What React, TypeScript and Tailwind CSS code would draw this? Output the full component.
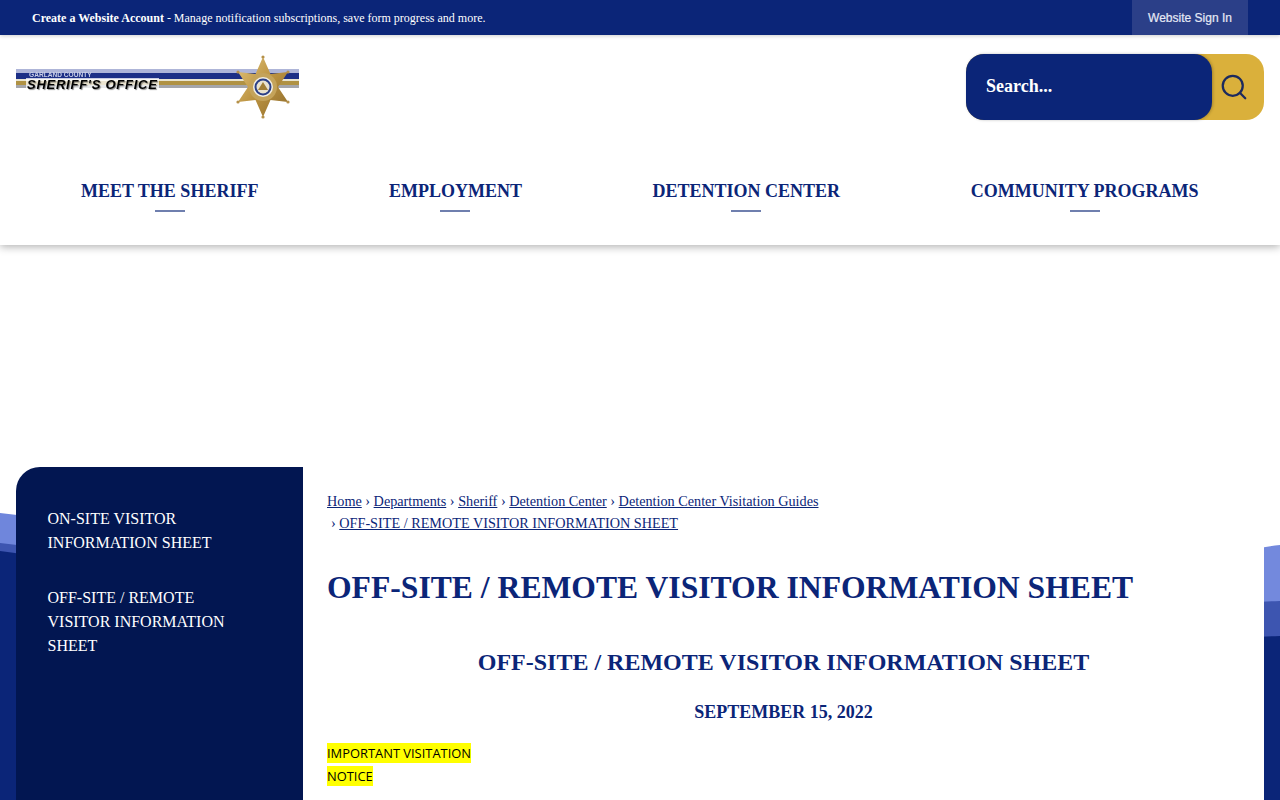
import { Search } from "lucide-react";

const navItems = ["MEET THE SHERIFF", "EMPLOYMENT", "DETENTION CENTER", "COMMUNITY PROGRAMS"];
const crumbs = ["Home", "Departments", "Sheriff", "Detention Center", "Detention Center Visitation Guides"];

function Logo() {
  return (
    <div className="relative h-[64px] w-[283px] blur-[0.3px]">
      <div className="absolute left-0 top-[13px] w-[283px]">
        <div className="h-[4px] bg-[#aeb5d8]" />
        <div className="h-[6px] bg-[#1c2f86]" />
        <div className="h-[2px] bg-[#e8e4d0]" />
        <div className="h-[4px] bg-[#b09243]" />
        <div className="h-[3px] bg-[#a5a6ab]" />
      </div>
      <span className="absolute left-[13px] top-[16px] text-[6.6px] font-bold leading-[6px] text-[#c9cfe6] [font-family:'Liberation_Sans',sans-serif]">
        GARLAND COUNTY
      </span>
      <span className="absolute left-[10px] top-[22px] bg-white/75 px-[1px] text-[13px] font-bold italic leading-[13px] tracking-[0.75px] text-black [font-family:'Liberation_Sans',sans-serif] [text-shadow:1px_1px_1px_rgba(0,0,0,0.45)]">
        SHERIFF'S OFFICE
      </span>
      <svg className="absolute left-[217px] top-[-2px]" width="60" height="66" viewBox="0 0 60 66">
        <defs>
          <linearGradient id="starGold" x1="0" y1="0" x2="1" y2="1">
            <stop offset="0" stopColor="#e3c67c" />
            <stop offset="0.5" stopColor="#bb9240" />
            <stop offset="1" stopColor="#8f6d2c" />
          </linearGradient>
        </defs>
        <polygon
          points="30,3 37.5,20 55,18 45,33 55,48 37.5,46 30,63 22.5,46 5,48 15,33 5,18 22.5,20"
          fill="url(#starGold)"
        />
        <circle cx="30" cy="3" r="1.6" fill="#b5914a" />
        <circle cx="30" cy="63" r="1.6" fill="#b5914a" />
        <circle cx="5" cy="18" r="1.6" fill="#b5914a" />
        <circle cx="55" cy="18" r="1.6" fill="#b5914a" />
        <circle cx="5" cy="48" r="1.6" fill="#b5914a" />
        <circle cx="55" cy="48" r="1.6" fill="#b5914a" />
        <circle cx="30" cy="33" r="14" fill="#c4a35a" />
        <circle cx="30" cy="33" r="10" fill="#f2efe4" />
        <circle cx="30" cy="33" r="8.5" fill="#2b3f86" />
        <circle cx="30" cy="33" r="6.5" fill="#e9e3cf" />
        <path d="M25 36 L30 28 L35 36 Z" fill="#a17f36" />
      </svg>
    </div>
  );
}

export default function App() {
  return (
    <div className="relative h-[800px] overflow-hidden bg-white [font-family:'Liberation_Serif',serif]">
      {/* background swooshes behind the content */}
      <svg className="absolute left-0 top-[500px]" width="1280" height="300" viewBox="0 0 1280 300">
        <path d="M0 13 Q 30 15 60 30 L 60 300 L 0 300 Z" fill="#6f86dc" />
        <path d="M0 43 Q 30 45 60 60 L 60 300 L 0 300 Z" fill="#3d55b0" />
        <path d="M0 51 Q 30 53 60 70 L 60 300 L 0 300 Z" fill="#0b2578" />
        <path d="M1220 58 Q 1250 48 1280 45 L 1280 300 L 1220 300 Z" fill="#7389dd" />
        <path d="M1220 104 Q 1250 102 1280 101 L 1280 300 L 1220 300 Z" fill="#3d55b0" />
        <path d="M1220 139 Q 1250 137 1280 136 L 1280 300 L 1220 300 Z" fill="#0b2578" />
      </svg>

      <header className="relative h-[245px] bg-white shadow-[0_2px_8px_rgba(0,0,0,0.3)]">
        <div className="relative z-10 flex h-[35px] items-center justify-between bg-[#0b2578] pl-8 pr-8 text-white shadow-[0_1px_4px_rgba(0,0,0,0.2)]">
          <p className="text-[12px]">
            <strong className="font-bold">Create a Website Account</strong> - Manage notification subscriptions, save form progress and more.
          </p>
          <a className="flex h-full w-[116px] items-center justify-center bg-[#2b3f88] text-[12px] font-medium text-[#e6e9f5] [-webkit-text-stroke:0.2px] [font-family:'Liberation_Sans',sans-serif]">
            Website Sign In
          </a>
        </div>

        <div className="flex justify-between pl-4 pr-4 pt-[19px]">
          <div className="pt-[2px]">
            <Logo />
          </div>
          <div className="flex h-[66px] w-[298px] rounded-[18px] bg-[#dab03b]">
            <div className="flex h-full w-[246px] items-center rounded-[18px] bg-[#0b2578] pb-[2px] pl-5 text-[18px] font-bold text-white shadow-[1px_0_3px_rgba(0,0,0,0.25)]">
              Search...
            </div>
            <div className="flex flex-1 items-center justify-center pr-2">
              <Search size={30} strokeWidth={1.8} className="text-[#1c2a5e]" />
            </div>
          </div>
        </div>
        <nav className="flex justify-between pl-[81px] pr-[81.5px] pt-[61px]">
          {navItems.map((item) => (
            <a key={item} className="flex flex-col items-center text-[18px] font-bold leading-[21px] text-[#0b2578]">
              {item}
              <span className="mt-[8px] h-[2px] w-[30px] bg-[#6f7fae]" />
            </a>
          ))}
        </nav>
      </header>

      <main className="relative mx-4 mt-[222px] flex h-[333px]">
        <aside className="w-[287px] shrink-0 rounded-tl-[24px] bg-[#021651] pl-[31.5px] pr-[60px] pt-[40px] text-[16px] leading-[24px] text-white">
          <a className="block">ON-SITE VISITOR INFORMATION SHEET</a>
          <a className="mt-[31px] block">OFF-SITE / REMOTE VISITOR INFORMATION SHEET</a>
        </aside>
        <section className="flex-1 bg-white pl-6 pr-6 pt-[23px] text-[#0b2578]">
          <div className="text-[14.23px] leading-[22px]">
            {crumbs.map((crumb, i) => (
              <span key={crumb}>
                {i > 0 && <span> › </span>}
                <a className="underline">{crumb}</a>
              </span>
            ))}
            <div className="pl-1">
              › <a className="underline">OFF-SITE / REMOTE VISITOR INFORMATION SHEET</a>
            </div>
          </div>
          <h1 className="mt-[34px] text-[31.65px] font-bold leading-[40px]">OFF-SITE / REMOTE VISITOR INFORMATION SHEET</h1>
          <h2 className="mt-[39px] text-center text-[24px] font-bold leading-[30px]">OFF-SITE / REMOTE VISITOR INFORMATION SHEET</h2>
          <p className="mt-[23px] text-center text-[18px] font-bold leading-[24px]">SEPTEMBER 15, 2022</p>
          <p className="mt-[18px] w-[160px] text-[12.9px] leading-[23px] text-black [font-family:'Open_Sans',sans-serif]">
            <span className="bg-[#ffff00] py-[1px]">IMPORTANT VISITATION NOTICE</span>
          </p>
        </section>
      </main>
    </div>
  );
}
